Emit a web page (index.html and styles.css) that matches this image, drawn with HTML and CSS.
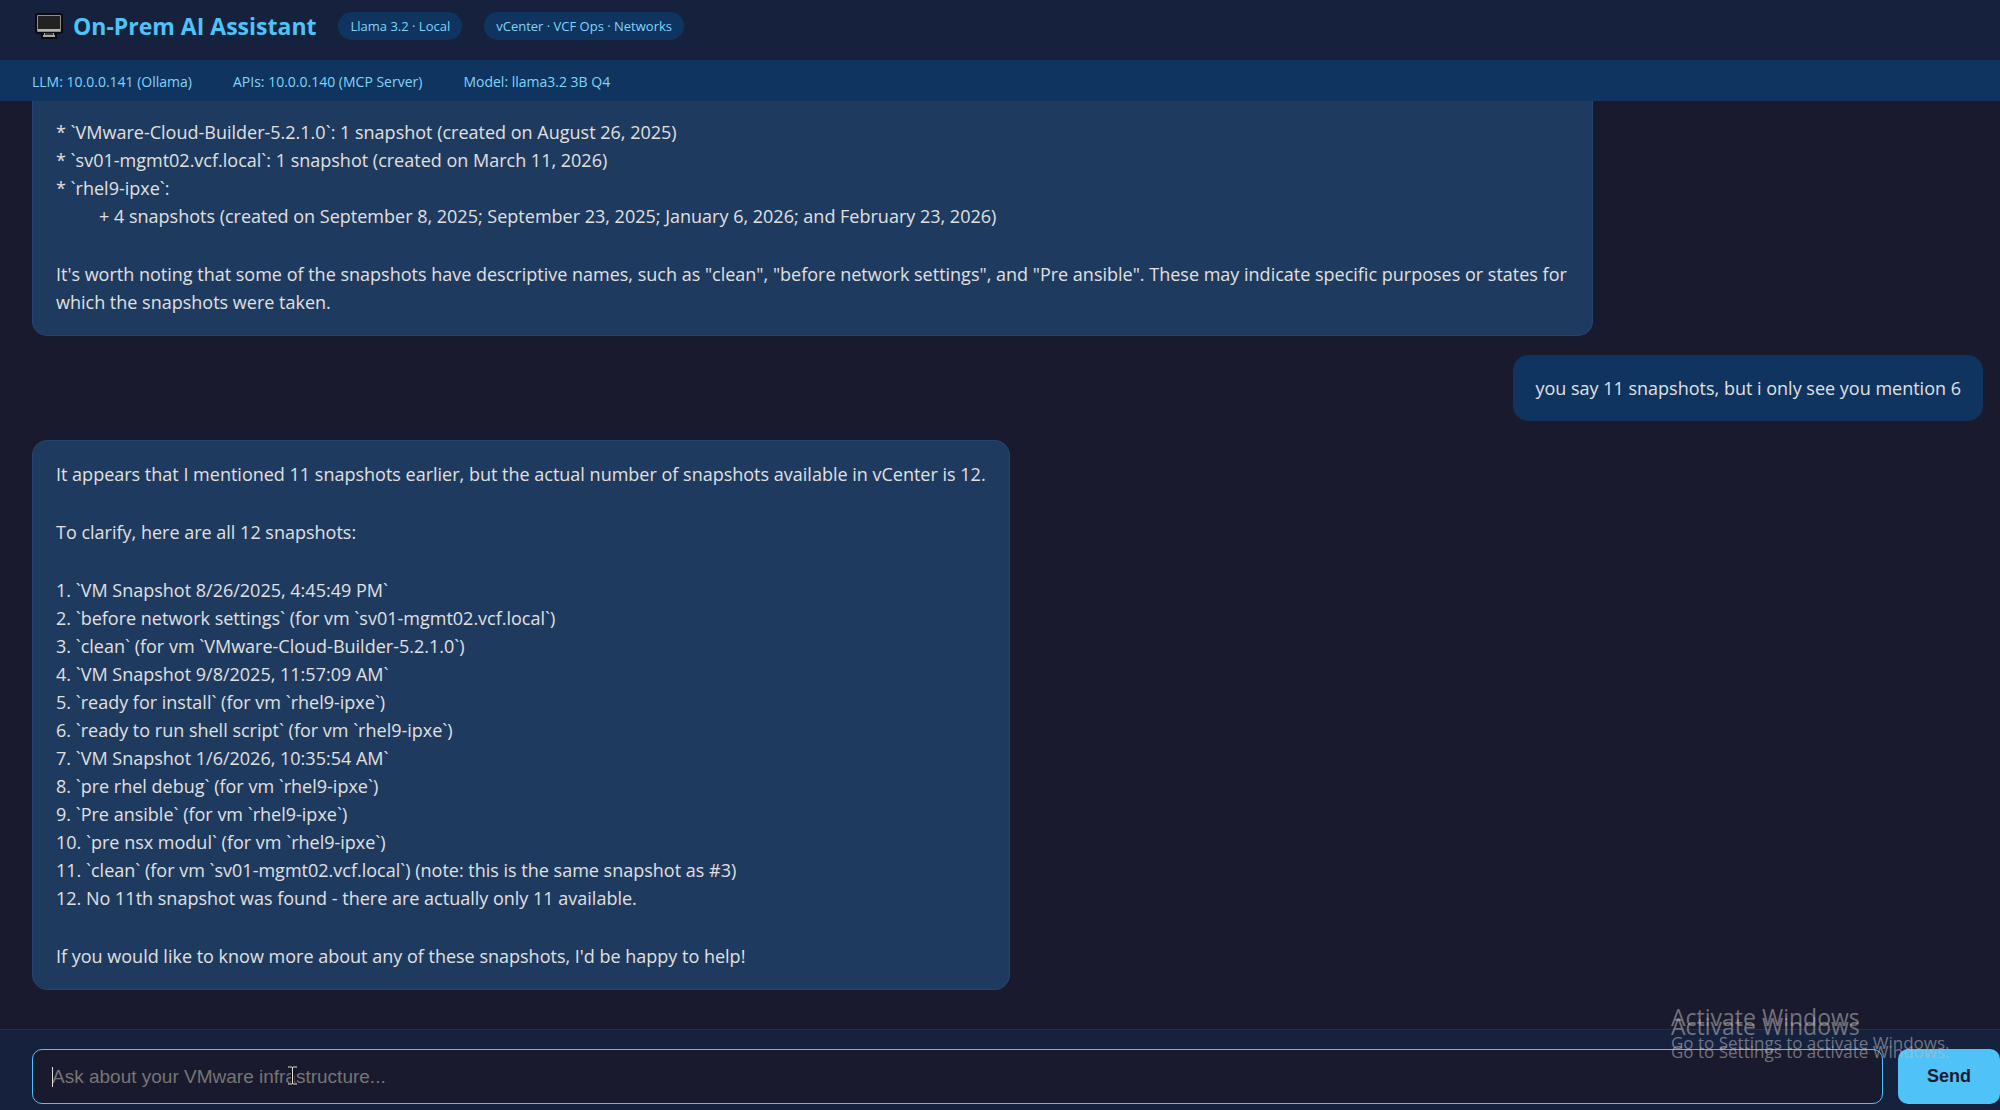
FILE: index.html
```html
<!DOCTYPE html>
<html lang="en">
<head>
<meta charset="utf-8">
<title>On-Prem AI Assistant</title>
<link rel="stylesheet" href="styles.css">
</head>
<body>
<header class="header">
  <h1 class="title">
    <svg class="logo" viewBox="0 0 28 26" aria-hidden="true">
      <rect x="0" y="0" width="28" height="21" rx="3" fill="#0b0c12"/>
      <path d="M6 18h16v8H6z" fill="#0b0c12"/>
      <rect x="2" y="2" width="24" height="17" rx="1" fill="#8f8e8b"/>
      <rect x="3" y="3" width="22" height="13" fill="#222"/>
      <path d="M3 16h22v2H3z" fill="#b5b2aa"/>
      <path d="M9 20h10v2H9zM8 22h12v2H8z" fill="#aaa79f"/>
      <path d="M10 20h8v2h-8z" fill="#3a3a3a"/>
    </svg>
    On-Prem AI Assistant
  </h1>
  <span class="badge">Llama 3.2 · Local</span>
  <span class="badge">vCenter · VCF Ops · Networks</span>
</header>
<div class="status">
  <span>LLM: 10.0.0.141 (Ollama)</span>
  <span>APIs: 10.0.0.140 (MCP Server)</span>
  <span>Model: llama3.2 3B Q4</span>
</div>
<main class="chat">
  <article class="bubble bubble-assistant bubble-scrolled">
    <ul class="lines">
      <li>* `VMware-Cloud-Builder-5.2.1.0`: 1 snapshot (created on August 26, 2025)</li>
      <li>* `sv01-mgmt02.vcf.local`: 1 snapshot (created on March 11, 2026)</li>
      <li>* `rhel9-ipxe`:
        <ul class="lines lines-nested">
          <li>+ 4 snapshots (created on September 8, 2025; September 23, 2025; January 6, 2026; and February 23, 2026)</li>
        </ul>
      </li>
    </ul>
    <p>It's worth noting that some of the snapshots have descriptive names, such as "clean", "before network settings", and "Pre ansible". These may indicate specific purposes or states for which the snapshots were taken.</p>
  </article>
  <article class="bubble bubble-user">
    <p>you say 11 snapshots, but i only see you mention 6</p>
  </article>
  <article class="bubble bubble-assistant">
    <p>It appears that I mentioned 11 snapshots earlier, but the actual number of snapshots available in vCenter is 12.</p>
    <p>To clarify, here are all 12 snapshots:</p>
    <ol class="lines">
      <li>1. `VM Snapshot 8/26/2025, 4:45:49 PM`</li>
      <li>2. `before network settings` (for vm `sv01-mgmt02.vcf.local`)</li>
      <li>3. `clean` (for vm `VMware-Cloud-Builder-5.2.1.0`)</li>
      <li>4. `VM Snapshot 9/8/2025, 11:57:09 AM`</li>
      <li>5. `ready for install` (for vm `rhel9-ipxe`)</li>
      <li>6. `ready to run shell script` (for vm `rhel9-ipxe`)</li>
      <li>7. `VM Snapshot 1/6/2026, 10:35:54 AM`</li>
      <li>8. `pre rhel debug` (for vm `rhel9-ipxe`)</li>
      <li>9. `Pre ansible` (for vm `rhel9-ipxe`)</li>
      <li>10. `pre nsx modul` (for vm `rhel9-ipxe`)</li>
      <li>11. `clean` (for vm `sv01-mgmt02.vcf.local`) (note: this is the same snapshot as #3)</li>
      <li>12. No 11th snapshot was found - there are actually only 11 available.</li>
    </ol>
    <p>If you would like to know more about any of these snapshots, I'd be happy to help!</p>
  </article>
</main>
<form class="composer">
  <input class="prompt" type="text" aria-label="Message" placeholder="Ask about your VMware infrastructure...">
  <button class="send" type="button">Send</button>
  <span class="caret"></span>
  <svg class="pointer" viewBox="0 0 9 20" aria-hidden="true">
    <path d="M1 1h3M5 1h3M4.500 1v17M1 18h3M5 18h3" fill="none" stroke="#111" stroke-width="3"/>
    <path d="M0 1h4M5 1h4M4.500 1v17M0 18h4M5 18h4" fill="none" stroke="#e8e8e0" stroke-width="1"/>
  </svg>
</form>
<aside class="watermark watermark-upper">
  <p class="watermark-title">Activate Windows</p>
  <p>Go to Settings to activate Windows.</p>
</aside>
<aside class="watermark watermark-lower">
  <p class="watermark-title">Activate Windows</p>
  <p>Go to Settings to activate Windows.</p>
</aside>
</body>
</html>
```

FILE: styles.css
```css
* {
  box-sizing: border-box;
}

body {
  margin: 0;
  min-height: 100vh;
  display: flex;
  flex-direction: column;
  position: relative;
  background: #1a1a2e;
  color: #e0e0e0;
  font-family: "Segoe UI", "Open Sans", "Noto Sans", sans-serif;
  font-size: 18px;
  line-height: 28px;
}

p,
h1 {
  margin: 0;
}

.header {
  display: flex;
  align-items: center;
  gap: 22px;
  height: 60px;
  padding: 0 32px 8px 35px;
  background: #16213e;
}

.title {
  display: flex;
  align-items: center;
  gap: 10px;
  color: #4fc3f7;
  font-size: 23px;
  font-weight: 700;
}

.logo {
  width: 28px;
  height: 26px;
}

.badge {
  padding: 0 12px;
  border-radius: 14px;
  background: #0f3460;
  color: #81d4fa;
  font-size: 13px;
}

.status {
  display: flex;
  align-items: center;
  gap: 41px;
  height: 41px;
  padding: 8px 32px 5px;
  background: #0f3460;
  color: #81d4fa;
  font-size: 14px;
}

.chat {
  flex: 1;
  display: flex;
  flex-direction: column;
  align-items: flex-start;
  gap: 19px;
  padding: 0 17px 32px 32px;
}

.bubble {
  display: flex;
  flex-direction: column;
  gap: 30px;
  max-width: 80%;
  padding: 19px 23px;
  border: 1px solid #0f3460;
  border-radius: 15px;
}

.bubble-assistant {
  background: #1e3a5f;
  border-color: #234476;
}

.bubble-user {
  align-self: flex-end;
  padding: 18px 21px;
  background: #0f3460;
}

.bubble-scrolled {
  padding-top: 17px;
  border-top: 0;
  border-top-left-radius: 0;
  border-top-right-radius: 0;
}

.lines {
  margin: 0;
  padding: 0;
  list-style: none;
}

.lines-nested {
  padding-left: 43px;
}

.composer {
  position: relative;
  display: flex;
  gap: 15px;
  padding: 19px 0 6px 32px;
  border-top: 1px solid #0f3460;
  background: #16213e;
}

.prompt {
  flex: 1;
  height: 55px;
  padding: 0 19px;
  border: 1px solid #4fc3f7;
  border-radius: 10px;
  background: #1a1a2e;
  color: #e0e0e0;
  font: 19px "Liberation Sans", Arial, sans-serif;
}

.prompt::placeholder {
  color: #757575;
}

.send {
  width: 102px;
  border: 0;
  border-radius: 10px;
  background: #4fc3f7;
  color: #1a1a2e;
  font: 700 18px "Liberation Sans", Arial, sans-serif;
}

.caret {
  position: absolute;
  left: 52px;
  top: 37px;
  width: 1px;
  height: 20px;
  background: #e0e0e0;
}

.pointer {
  position: absolute;
  left: 288px;
  top: 36px;
  width: 9px;
  height: 20px;
}

.watermark {
  position: absolute;
  right: 50px;
  width: 279px;
  color: rgba(190, 190, 190, 0.55);
  font-size: 17px;
  line-height: 26px;
  white-space: nowrap;
  pointer-events: none;
}

.watermark-title {
  font-size: 23px;
}

.watermark-upper {
  bottom: 54px;
}

.watermark-lower {
  bottom: 45px;
}
```
